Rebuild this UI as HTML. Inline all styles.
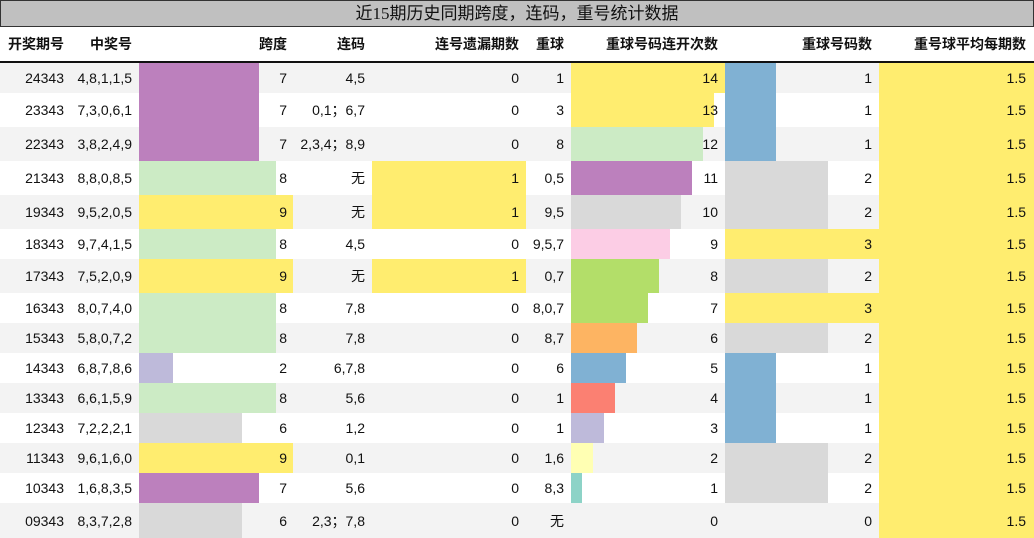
<!DOCTYPE html>
<html><head><meta charset="utf-8"><style>
*{margin:0;padding:0;box-sizing:border-box}
body{width:1034px;height:538px;background:#fff;font-family:"Liberation Sans","Noto Sans CJK SC",sans-serif;font-size:14px;color:#111;position:relative;overflow:hidden}
.title{position:absolute;left:0;top:0;width:1034px;height:27px;background:#c0c0c0;border:1px solid #333;text-align:center;font-size:17px;line-height:25px;font-family:"Liberation Serif","Noto Sans CJK SC",sans-serif}
.hdr{position:absolute;left:0;top:27px;width:1034px;height:36px;border-bottom:2px solid #111;font-weight:bold}
.r{position:absolute;left:0;width:1034px}
.r:nth-of-type(odd){background:#f3f3f3}
.t{position:absolute;top:0;bottom:0;display:flex;align-items:center;justify-content:flex-end;white-space:nowrap}
.b{position:absolute;top:0;bottom:0}
.c1{right:970px}.c2{right:902px}.c3{right:747px}.c4{right:669px}.c5{right:515px}.c6{right:470px}.c7{right:316px}.c8{right:162px}.c9{right:8px}
.k{left:139px}.m{left:571px}.n{left:725px}
.y{background:#ffed6f}.g{background:#ccebc5}.p{background:#bc80bd}.l{background:#bebada}.s{background:#d9d9d9}
</style></head><body>
<div class="title">近15期历史同期跨度，连码，重号统计数据</div>
<div class="hdr"><span class="t c1">开奖期号</span><span class="t c2">中奖号</span><span class="t c3">跨度</span><span class="t c4">连码</span><span class="t c5">连号遗漏期数</span><span class="t c6">重球</span><span class="t c7">重球号码连开次数</span><span class="t c8">重球号码数</span><span class="t c9">重号球平均每期数</span></div>
<div id="rows">
<div class="r" style="top:63px;height:30px;background:#f3f3f3"><div class="b k p" style="width:120px"></div><div class="b m y" style="width:154px"></div><div class="b n" style="width:51px;background:#80b1d3"></div><div class="b y" style="left:879px;width:155px"></div><span class="t c1">24343</span><span class="t c2">4,8,1,1,5</span><span class="t c3">7</span><span class="t c4">4,5</span><span class="t c5">0</span><span class="t c6">1</span><span class="t c7">14</span><span class="t c8">1</span><span class="t c9">1.5</span></div>
<div class="r" style="top:93px;height:34px;background:#fff"><div class="b k p" style="width:120px"></div><div class="b m y" style="width:143px"></div><div class="b n" style="width:51px;background:#80b1d3"></div><div class="b y" style="left:879px;width:155px"></div><span class="t c1">23343</span><span class="t c2">7,3,0,6,1</span><span class="t c3">7</span><span class="t c4">0,1；6,7</span><span class="t c5">0</span><span class="t c6">3</span><span class="t c7">13</span><span class="t c8">1</span><span class="t c9">1.5</span></div>
<div class="r" style="top:127px;height:34px;background:#f3f3f3"><div class="b k p" style="width:120px"></div><div class="b m g" style="width:132px"></div><div class="b n" style="width:51px;background:#80b1d3"></div><div class="b y" style="left:879px;width:155px"></div><span class="t c1">22343</span><span class="t c2">3,8,2,4,9</span><span class="t c3">7</span><span class="t c4">2,3,4；8,9</span><span class="t c5">0</span><span class="t c6">8</span><span class="t c7">12</span><span class="t c8">1</span><span class="t c9">1.5</span></div>
<div class="r" style="top:161px;height:34px;background:#fff"><div class="b k g" style="width:137px"></div><div class="b y" style="left:372px;width:154px"></div><div class="b m p" style="width:121px"></div><div class="b n s" style="width:103px"></div><div class="b y" style="left:879px;width:155px"></div><span class="t c1">21343</span><span class="t c2">8,8,0,8,5</span><span class="t c3">8</span><span class="t c4">无</span><span class="t c5">1</span><span class="t c6">0,5</span><span class="t c7">11</span><span class="t c8">2</span><span class="t c9">1.5</span></div>
<div class="r" style="top:195px;height:34px;background:#f3f3f3"><div class="b k y" style="width:154px"></div><div class="b y" style="left:372px;width:154px"></div><div class="b m s" style="width:110px"></div><div class="b n s" style="width:103px"></div><div class="b y" style="left:879px;width:155px"></div><span class="t c1">19343</span><span class="t c2">9,5,2,0,5</span><span class="t c3">9</span><span class="t c4">无</span><span class="t c5">1</span><span class="t c6">9,5</span><span class="t c7">10</span><span class="t c8">2</span><span class="t c9">1.5</span></div>
<div class="r" style="top:229px;height:30px;background:#fff"><div class="b k g" style="width:137px"></div><div class="b m" style="width:99px;background:#fccde5"></div><div class="b n y" style="width:154px"></div><div class="b y" style="left:879px;width:155px"></div><span class="t c1">18343</span><span class="t c2">9,7,4,1,5</span><span class="t c3">8</span><span class="t c4">4,5</span><span class="t c5">0</span><span class="t c6">9,5,7</span><span class="t c7">9</span><span class="t c8">3</span><span class="t c9">1.5</span></div>
<div class="r" style="top:259px;height:34px;background:#f3f3f3"><div class="b k y" style="width:154px"></div><div class="b y" style="left:372px;width:154px"></div><div class="b m" style="width:88px;background:#b3de69"></div><div class="b n s" style="width:103px"></div><div class="b y" style="left:879px;width:155px"></div><span class="t c1">17343</span><span class="t c2">7,5,2,0,9</span><span class="t c3">9</span><span class="t c4">无</span><span class="t c5">1</span><span class="t c6">0,7</span><span class="t c7">8</span><span class="t c8">2</span><span class="t c9">1.5</span></div>
<div class="r" style="top:293px;height:30px;background:#fff"><div class="b k g" style="width:137px"></div><div class="b m" style="width:77px;background:#b3de69"></div><div class="b n y" style="width:154px"></div><div class="b y" style="left:879px;width:155px"></div><span class="t c1">16343</span><span class="t c2">8,0,7,4,0</span><span class="t c3">8</span><span class="t c4">7,8</span><span class="t c5">0</span><span class="t c6">8,0,7</span><span class="t c7">7</span><span class="t c8">3</span><span class="t c9">1.5</span></div>
<div class="r" style="top:323px;height:30px;background:#f3f3f3"><div class="b k g" style="width:137px"></div><div class="b m" style="width:66px;background:#fdb462"></div><div class="b n s" style="width:103px"></div><div class="b y" style="left:879px;width:155px"></div><span class="t c1">15343</span><span class="t c2">5,8,0,7,2</span><span class="t c3">8</span><span class="t c4">7,8</span><span class="t c5">0</span><span class="t c6">8,7</span><span class="t c7">6</span><span class="t c8">2</span><span class="t c9">1.5</span></div>
<div class="r" style="top:353px;height:30px;background:#fff"><div class="b k l" style="width:34px"></div><div class="b m" style="width:55px;background:#80b1d3"></div><div class="b n" style="width:51px;background:#80b1d3"></div><div class="b y" style="left:879px;width:155px"></div><span class="t c1">14343</span><span class="t c2">6,8,7,8,6</span><span class="t c3">2</span><span class="t c4">6,7,8</span><span class="t c5">0</span><span class="t c6">6</span><span class="t c7">5</span><span class="t c8">1</span><span class="t c9">1.5</span></div>
<div class="r" style="top:383px;height:30px;background:#f3f3f3"><div class="b k g" style="width:137px"></div><div class="b m" style="width:44px;background:#fb8072"></div><div class="b n" style="width:51px;background:#80b1d3"></div><div class="b y" style="left:879px;width:155px"></div><span class="t c1">13343</span><span class="t c2">6,6,1,5,9</span><span class="t c3">8</span><span class="t c4">5,6</span><span class="t c5">0</span><span class="t c6">1</span><span class="t c7">4</span><span class="t c8">1</span><span class="t c9">1.5</span></div>
<div class="r" style="top:413px;height:30px;background:#fff"><div class="b k s" style="width:103px"></div><div class="b m l" style="width:33px"></div><div class="b n" style="width:51px;background:#80b1d3"></div><div class="b y" style="left:879px;width:155px"></div><span class="t c1">12343</span><span class="t c2">7,2,2,2,1</span><span class="t c3">6</span><span class="t c4">1,2</span><span class="t c5">0</span><span class="t c6">1</span><span class="t c7">3</span><span class="t c8">1</span><span class="t c9">1.5</span></div>
<div class="r" style="top:443px;height:30px;background:#f3f3f3"><div class="b k y" style="width:154px"></div><div class="b m" style="width:22px;background:#ffffb3"></div><div class="b n s" style="width:103px"></div><div class="b y" style="left:879px;width:155px"></div><span class="t c1">11343</span><span class="t c2">9,6,1,6,0</span><span class="t c3">9</span><span class="t c4">0,1</span><span class="t c5">0</span><span class="t c6">1,6</span><span class="t c7">2</span><span class="t c8">2</span><span class="t c9">1.5</span></div>
<div class="r" style="top:473px;height:30px;background:#fff"><div class="b k p" style="width:120px"></div><div class="b m" style="width:11px;background:#8dd3c7"></div><div class="b n s" style="width:103px"></div><div class="b y" style="left:879px;width:155px"></div><span class="t c1">10343</span><span class="t c2">1,6,8,3,5</span><span class="t c3">7</span><span class="t c4">5,6</span><span class="t c5">0</span><span class="t c6">8,3</span><span class="t c7">1</span><span class="t c8">2</span><span class="t c9">1.5</span></div>
<div class="r" style="top:503px;height:35px;background:#f3f3f3"><div class="b k s" style="width:103px"></div><div class="b y" style="left:879px;width:155px"></div><span class="t c1">09343</span><span class="t c2">8,3,7,2,8</span><span class="t c3">6</span><span class="t c4">2,3；7,8</span><span class="t c5">0</span><span class="t c6">无</span><span class="t c7">0</span><span class="t c8">0</span><span class="t c9">1.5</span></div>
</div>
</body></html>
